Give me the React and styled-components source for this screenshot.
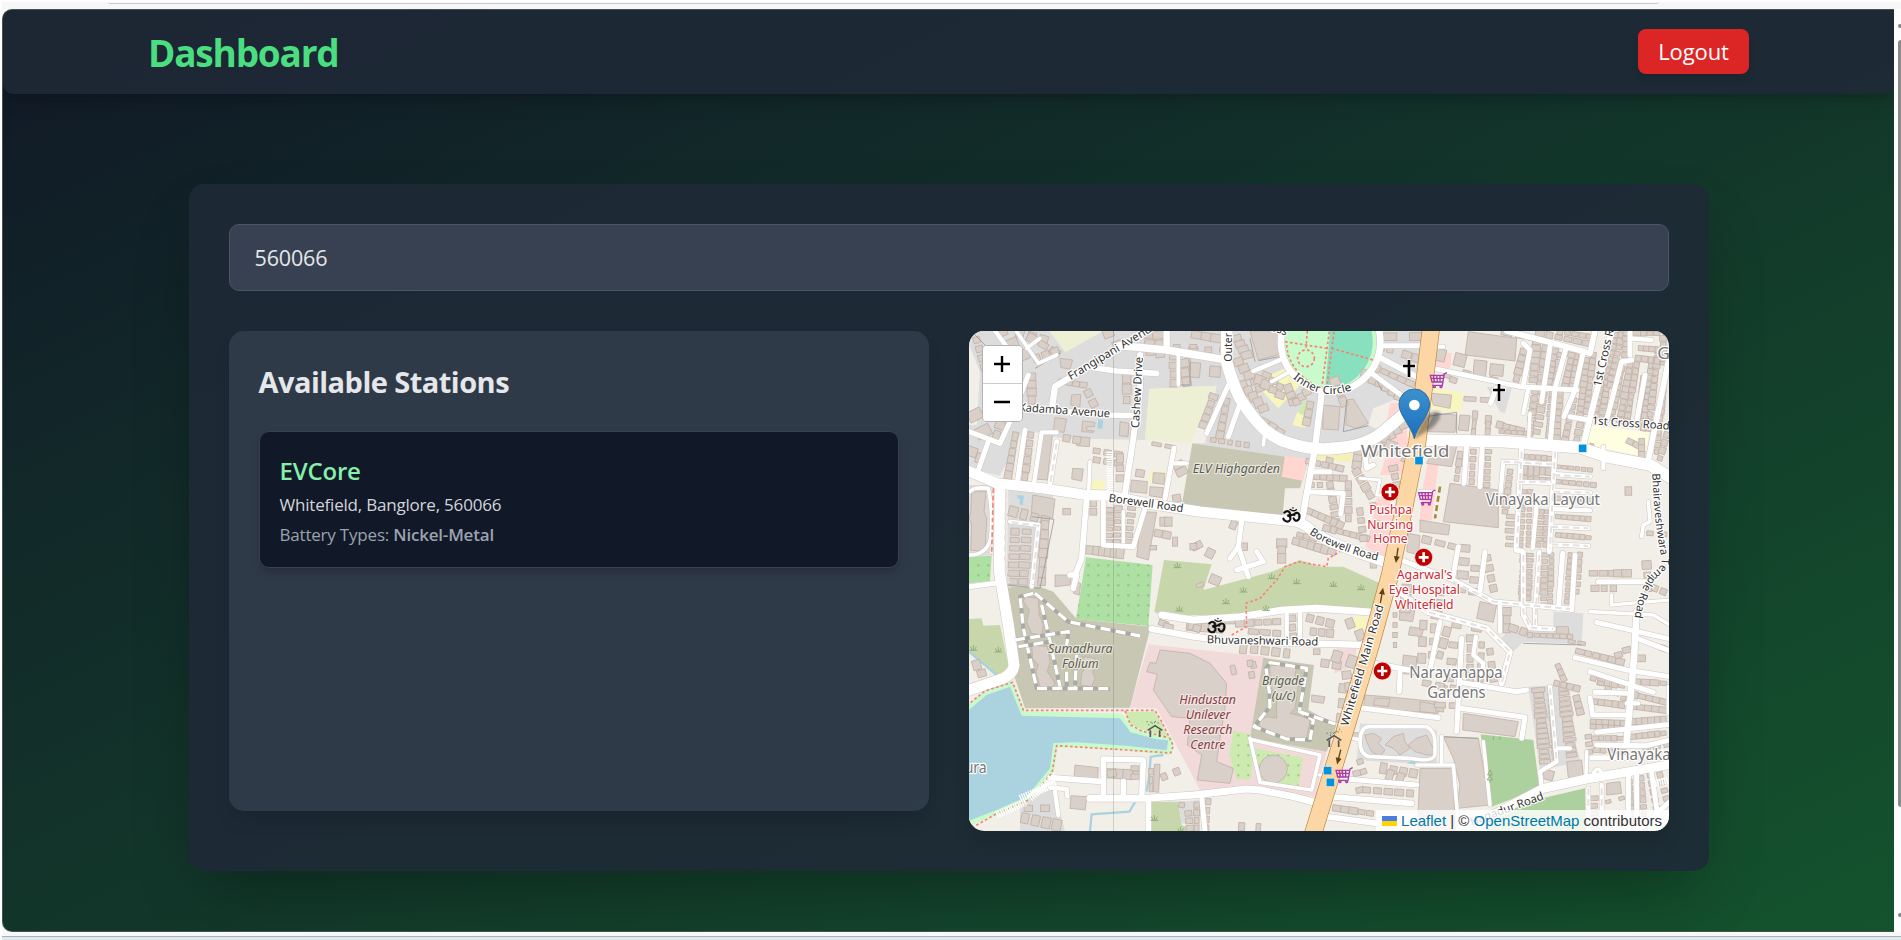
import React from 'react';
import styled, { createGlobalStyle } from 'styled-components';

const GlobalStyle = createGlobalStyle`
  *, *::before, *::after { box-sizing: border-box; }
  body { margin: 0; background: #fff; font-family: "Open Sans", "Noto Sans", sans-serif; overflow: hidden; }
  h1, h2, h3, p { margin: 0; }
  button, input { font-family: inherit; }
`;

/* ---------- browser frame ---------- */
const Frame = styled.div`
  display: flex;
  flex-direction: column;
  height: 940px;
  width: 1901px;
  background: #fafafa;
  border-left: 2px solid #fff;
  overflow: hidden;
`;
const TopStrip = styled.div`
  flex: 0 0 9px;
  background: #f7f7f7;
  border-top: 2px solid #fff;
  padding: 0 242px 0 106px;
`;
const AddressEdge = styled.div`
  height: 2px;
  border-bottom: 1px solid #c9cbcd;
  border-radius: 0 0 8px 8px;
`;
const Viewport = styled.div`
  display: flex;
  flex: 1 1 auto;
  min-height: 0;
`;
const BottomStrip = styled.div`
  flex: 0 0 8px;
  display: flex;
  align-items: flex-end;
  background: #f7f8f8;
  &::after {
    content: "";
    flex: 1;
    height: 4px;
    background: #dfe8ee;
    border-top: 1px solid #a5b2b8;
  }
`;
const Scrollbar = styled.div`
  flex: 0 0 7px;
  display: flex;
  flex-direction: column;
  align-items: flex-end;
  justify-content: space-between;
  padding: 15px 0 15px;
  background: #fdfdfd;
`;
const ScrollArrow = styled.span`
  width: 3px;
  height: 4px;
  border-radius: 3px 0 0 3px;
  background: #85888b;
`;
const ScrollThumb = styled.span`
  width: 3px;
  height: 767px;
  margin-bottom: 94px;
  border-radius: 3px 0 0 3px;
  background: #8b8b8b;
`;

/* ---------- page ---------- */
const Page = styled.div`
  width: 1892px;
  border-radius: 10px 0 0 10px;
  border: solid #45524f;
  border-width: 1px 0 1px 1px;
  overflow: hidden;
  background: linear-gradient(to bottom right, #111827, #14532d);
`;
const Header = styled.header`
  height: 84px;
  padding: 0 145px;
  display: flex;
  align-items: center;
  justify-content: space-between;
  background: rgba(31, 41, 55, 0.88);
  border-radius: 0 0 10px 10px;
  box-shadow: 0 12px 19px -4px rgba(0, 0, 0, 0.15), 0 5px 8px -5px rgba(0, 0, 0, 0.15);
`;
const Brand = styled.h1`
  font-size: 37px;
  line-height: 45px;
  font-weight: 700;
  letter-spacing: -1.2px;
  color: #4ade80;
  padding-top: 1px;
`;
const LogoutButton = styled.button`
  width: 111px;
  height: 45px;
  margin-bottom: 2px;
  padding: 0 0 1px;
  border: 0;
  border-radius: 8px;
  background: #dc2626;
  color: #fff;
  font-size: 22px;
  font-weight: 500;
  letter-spacing: -0.1px;
  box-shadow: 0 5px 8px -1px rgba(0, 0, 0, 0.15);
`;
const Card = styled.main`
  width: 1520px;
  height: 687px;
  margin: 90px auto 0;
  padding: 40px;
  display: flex;
  flex-direction: column;
  gap: 40px;
  border-radius: 15px;
  background: rgba(31, 41, 55, 0.88);
  box-shadow: 0 31px 62px -15px rgba(0, 0, 0, 0.3);
`;
const SearchInput = styled.input`
  display: block;
  flex: 0 0 67px;
  width: 100%;
  padding: 0 25px;
  border: 1px solid #4b5563;
  border-radius: 10px;
  background: #374151;
  color: #e5e7eb;
  font-size: 21.5px;
  letter-spacing: -0.15px;
  outline: none;
`;
const Columns = styled.div`
  display: grid;
  grid-template-columns: 700px 700px;
  gap: 40px;
  align-items: start;
`;
const Panel = styled.section`
  height: 480px;
  padding: 30px;
  border-radius: 15px;
  background: rgba(55, 65, 81, 0.7);
  box-shadow: 0 12px 19px -4px rgba(0, 0, 0, 0.15);
`;
const PanelTitle = styled.h2`
  font-size: 29px;
  line-height: 42px;
  font-weight: 700;
  letter-spacing: -0.53px;
  color: #e5e7eb;
  margin-bottom: 28px;
`;
const StationCard = styled.article`
  height: 137px;
  padding: 19px 20px;
  border: 1px solid #374151;
  border-radius: 10px;
  background: #111827;
  box-shadow: 0 5px 8px -1px rgba(0, 0, 0, 0.2);
`;
const StationName = styled.h3`
  font-size: 24px;
  line-height: 39px;
  font-weight: 600;
  letter-spacing: -0.2px;
  color: #86efac;
`;
const StationLine = styled.p`
  font-size: 17px;
  line-height: 30px;
  letter-spacing: -0.2px;
  color: ${(p) => (p.$muted ? '#9ca3af' : '#d1d5db')};
  strong { font-weight: 600; }
`;

/* ---------- map ---------- */
const MapBox = styled.section`
  position: relative;
  height: 500px;
  border-radius: 15px;
  overflow: hidden;
  background: #f2efe9;
  box-shadow: 0 12px 19px -4px rgba(0, 0, 0, 0.15);
`;
const MapSvg = styled.svg`
  display: block;
  font-family: "Noto Sans", "Open Sans", sans-serif;
`;
const LabelLayer = styled.g`
  paint-order: stroke;
  stroke-width: 7px;
  stroke-linejoin: round;
`;
const ZoomControl = styled.div`
  position: absolute;
  left: 13px;
  top: 14px;
  width: 41px;
  border: 1px solid rgba(0, 0, 0, 0.3);
  border-radius: 5px;
  overflow: hidden;
  background: #fff;
`;
const ZoomButton = styled.button`
  display: flex;
  width: 39px;
  height: ${(p) => (p.$divided ? '38px' : '37px')};
  align-items: center;
  justify-content: center;
  border: 0;
  border-top: ${(p) => (p.$divided ? '1px solid #ccc' : '0')};
  background: #fff;
  padding: 0 0 1px;
`;
const Attribution = styled.div`
  position: absolute;
  right: 0;
  bottom: 0;
  height: 21px;
  padding: 0 6.5px;
  display: flex;
  align-items: center;
  background: rgba(255, 255, 255, 0.8);
  font: 15px/21px "Liberation Sans", Arial, sans-serif;
  color: #333;
  white-space: pre;
  a { color: #0078a8; text-decoration: none; }
  svg { margin-right: 4px; }
`;

const AREAS = [
  ['#dddddd', '27,18 720,18 815,18 830,60 815,175 770,182 568,192 555,345 300,340 190,312 120,452 27,430'],
  ['#dddddd', '770,180 815,110 815,18 1385,18 1375,200 1250,335 1090,385 1045,405 697,355 735,355'],
  ['#f2efe9', '1240,250 1290,230 1380,170 1375,260 1270,320 1225,300'],
  ['#dddddd', '27,480 95,480 90,690 27,695'],
  ['#dddddd', '145,490 280,510 240,790 140,785'],
  ['#f2efe9', '27,60 60,140 50,300 27,300'],
  ['#eef0d5', '268,18 430,18 316,82'],
  ['#eef0d5', '568,192 770,182 693,355 555,345'],
  ['#c7c7b4', '697,355 1045,405 1020,490 975,490 968,572 665,542'],
  ['#ffd6d1', '975,392 1042,402 1030,468 965,455'],
  ['#f8f6bf', '882,172 975,130 1020,180 955,250'],
  ['#f8f6bf', '1012,260 1050,265 1035,308 998,300'],
  ['#cdebb0', '1030,228 1055,232 1045,275 1015,265'],
  ['#f5f0b5', '1070,378 1180,382 1172,412 1065,402'],
  ['#ffd6d1', '1290,235 1330,230 1350,400 1330,450 1260,450 1275,400 1310,400 1280,290'],
  ['#ffd6d1', '1250,520 1290,525 1330,600 1280,700 1215,665 1235,600'],
  ['#ffd6d1', '1425,80 1475,85 1470,130 1422,125'],
  ['#ffd6d1', '1405,400 1437,405 1415,585 1378,590 1390,480'],
  ['#aedfa3', '27,695 95,692 90,768 27,775'],
  ['#aedfa3', '378,697 578,720 565,903 348,882'],
  ['#c8d7ab', '612,705 755,718 730,795 935,740 1020,705 1080,725 1150,725 1260,775 1235,850 1070,845 820,870 600,870 583,860'],
  ['#c8d7ab', '27,882 65,880 70,902 120,900 148,1035 110,1055 27,980'],
  ['#c7c7b4', '140,785 240,785 280,800 350,882 572,905 510,1148 195,1150 165,1060'],
  ['#f2dada', '565,958 915,995 870,1240 1100,1280 1065,1415 880,1400 720,1395 590,1150 510,1148'],
  ['#f2dada', '1130,970 1190,970 1185,1025 1122,1045'],
  ['#c7c7b4', '910,998 1062,1020 1045,1155 1130,1200 1100,1280 870,1240'],
  ['#cdebb0', '820,1215 870,1230 885,1270 870,1365 830,1362 808,1290'],
  ['#cdebb0', '885,1270 1030,1298 1015,1385 905,1370'],
  ['#c8d7ab', '575,1430 655,1430 665,1500 710,1518 575,1518'],
  ['#dddddd', '655,1430 720,1425 720,1500 665,1495'],
  ['#dddddd', '180,1430 280,1390 315,1518 180,1518'],
  ['#dddddd', '1200,1195 1430,1215 1430,1320 1190,1305'],
  ['#dddddd', '1780,860 1870,865 1865,957 1690,950 1655,985 1625,940 1650,905 1780,920'],
  ['#dddddd', '1705,1085 1790,1080 1862,1310 1790,1325 1740,1335'],
  ['#dddddd', '1580,185 1655,190 1635,265 1620,260'],
  ['#add19e', '1562,1228 1720,1245 1738,1390 1595,1445'],
  ['#add19e', '1595,1455 1875,1390 1877,1518 1580,1518'],
  ['#fffee0', '1885,300 2068,322 2055,395 1875,360'],
  ['#f8f6bf', '1420,190 1510,205 1502,265 1410,250'],
  ['#f8f6bf', '1185,872 1222,875 1215,915 1182,910'],
  ['#f8f6bf', '572,438 620,442 615,482 568,472'],
  ['#f8f6bf', '398,465 435,468 432,498 394,494'],
  ['#aad3df', '415,283 430,285 427,312 412,310'],
  ['#aad3df', '172,510 192,512 188,540 178,538 180,522 172,520'],
  ['#aad3df', '1340,1315 1360,1305 1380,1320'],
];

const BIG = [
  '600,975 690,985 750,1015 800,1075 795,1150 780,1240 770,1310 820,1330 810,1375 712,1365 725,1290 682,1260 690,1180 635,1175 580,1095 592,1048 560,1040 570,1012 588,1015',
  '1525,20 1670,40 1665,108 1515,90', '1470,475 1615,495 1615,608 1450,590', '1380,585 1470,600 1465,630 1380,620',
  '870,18 960,18 970,85 895,105', '1090,240 1140,245 1135,315 1088,312', '1160,225 1180,222 1225,295 1190,310 1158,300',
  '218,510 285,522 278,580 214,568', '35,500 78,500 72,560 80,580 75,680 32,675 35,600 28,580 32,560',
  '245,320 278,325 262,465 222,462', '338,430 370,432 365,468 335,462', '300,100 338,105 330,132 303,128',
  '350,335 390,338 388,365 350,362', '285,278 320,282 312,322 280,318', '368,288 405,292 403,305 380,305 380,315 403,318 400,322 365,320',
  '480,290 507,295 504,335 478,332', '335,210 362,208 360,245 332,240', '545,560 590,562 565,705 530,695',
  '515,465 562,470 560,505 510,500', '570,485 610,488 606,518 568,512', '580,443 615,445 612,478 578,474',
  '195,815 235,820 238,870 250,900 245,930 215,925 200,890 208,855 190,830', '215,960 262,965 270,1010 262,1040 285,1075 275,1090 240,1085 228,1040 235,1020 218,1000', '370,995 405,1000 398,1040 405,1060 395,1085 362,1080 365,1045 375,1030',
  '345,1320 415,1328 413,1362 342,1355', '333,1412 380,1415 376,1455 330,1450', '583,1318 600,1318 596,1402 580,1400',
  '930,1020 1010,1025 1005,1050 1015,1080 1005,1150 990,1165 1045,1180 1050,1190 1038,1245 970,1235 905,1215 895,1190 920,1175 950,1180 950,1120 930,1080',
  '1240,1225 1265,1240 1255,1255 1275,1275 1260,1295 1235,1280 1220,1250 1215,1230', '1300,1235 1330,1225 1335,1250 1350,1270 1320,1290 1300,1270 1275,1260', '1370,1240 1400,1230 1415,1260 1430,1290 1400,1290 1365,1280 1345,1260',
  '1510,1165 1675,1190 1665,1235 1508,1215', '1380,1330 1480,1330 1485,1518 1372,1518', '1450,1235 1555,1240 1590,1440 1490,1450 1500,1380 1480,1300',
  '1215,1110 1280,1115 1430,1130 1430,1165 1210,1148', '1150,1220 1210,1225 1205,1240 1150,1235', '1430,355 1490,365 1475,425 1400,415', '1380,1130 1435,1140 1435,1165 1380,1160',
  '1425,265 1490,270 1485,322 1400,320', '1345,625 1380,632 1376,690 1340,680', '1100,395 1120,400 1115,430 1095,425',
  '1245,1120 1290,1120 1285,1145 1240,1140', '1330,990 1370,995 1368,1050 1325,1045', '1320,850 1365,855 1358,890 1318,885', '1560,830 1610,840 1600,892 1550,880',
  '1820,1310 1865,1305 1870,1360 1825,1358', '1790,905 1825,905 1828,940 1788,940', '1410,205 1475,210 1470,250 1420,240',
  '285,750 335,750 330,780 285,785', '345,770 362,775 358,810 340,805', '1940,1375 1980,1370 1985,1405 1940,1410',
  '1500,270 1530,272 1525,318 1495,315', '1350,905 1390,912 1385,935 1345,930', '1055,1110 1095,1115 1090,1135 1055,1130',
];

/* x1, y1, x2, y2, count, width, height of the building plots */
const ROWS = [
  [50, 45, 90, 180, 6, 24, 20], [125, 20, 190, 90, 3, 36, 28], [180, 25, 250, 45, 3, 26, 24], [215, 40, 285, 80, 3, 30, 22],
  [230, 100, 285, 80, 3, 22, 26], [215, 155, 215, 225, 4, 24, 24], [45, 270, 70, 320, 2, 40, 34], [120, 300, 110, 330, 2, 26, 24],
  [35, 380, 60, 400, 2, 28, 26], [165, 335, 145, 450, 6, 20, 24], [212, 330, 195, 455, 6, 20, 22], [305, 170, 370, 180, 4, 20, 16],
  [445, 25, 475, 60, 2, 32, 26], [385, 205, 400, 235, 2, 22, 22], [500, 160, 500, 225, 3, 24, 26], [570, 30, 570, 80, 3, 28, 24], [595, 30, 600, 85, 3, 30, 26],
  [320, 340, 350, 345, 2, 26, 22], [410, 378, 475, 388, 3, 24, 16], [410, 405, 475, 415, 3, 24, 16], [480, 400, 480, 460, 3, 22, 24],
  [540, 445, 560, 448, 1, 26, 26], [590, 358, 630, 365, 2, 28, 12], [655, 420, 665, 440, 2, 30, 22], [650, 520, 655, 550, 2, 22, 22],
  [160, 560, 255, 585, 4, 24, 28], [165, 620, 160, 770, 7, 30, 18], [200, 620, 190, 770, 7, 30, 18], [255, 600, 245, 770, 7, 24, 28],
  [400, 535, 400, 560, 2, 20, 20], [450, 555, 445, 650, 6, 26, 14], [475, 550, 470, 650, 6, 22, 14], [515, 550, 505, 650, 6, 22, 14], [390, 675, 480, 685, 6, 22, 28],
  [320, 560, 320, 560, 1, 28, 20], [610, 590, 625, 590, 2, 24, 26], [595, 625, 620, 630, 2, 26, 20], [645, 650, 645, 650, 1, 16, 24], [580, 668, 580, 668, 1, 20, 16], [705, 665, 715, 660, 2, 20, 22],
  [640, 95, 640, 175, 4, 22, 20], [670, 115, 680, 170, 3, 30, 24], [700, 75, 790, 75, 3, 24, 16], [705, 135, 765, 140, 2, 36, 38], [650, 65, 700, 65, 2, 22, 14], [710, 30, 770, 40, 3, 34, 24],
  [830, 40, 860, 90, 4, 28, 20], [835, 110, 900, 190, 5, 28, 22], [900, 165, 960, 210, 4, 32, 24], [920, 150, 960, 185, 3, 24, 20], [760, 215, 730, 300, 5, 24, 20], [800, 230, 780, 330, 5, 22, 22],
  [850, 180, 910, 250, 5, 26, 26], [890, 280, 960, 320, 4, 24, 22], [985, 190, 1000, 230, 3, 26, 22], [1010, 230, 1040, 200, 3, 22, 24], [1050, 240, 1040, 290, 3, 20, 24], [760, 345, 860, 360, 5, 16, 14],
  [1125, 170, 1150, 230, 3, 26, 26], [1220, 150, 1320, 215, 6, 30, 26], [1250, 130, 1350, 175, 5, 26, 18], [1290, 35, 1370, 35, 2, 46, 26], [1340, 90, 1370, 100, 2, 30, 24], [1265, 70, 1290, 75, 2, 18, 16],
  [1195, 380, 1190, 420, 3, 24, 20], [1240, 380, 1330, 300, 6, 26, 24], [1270, 340, 1340, 400, 4, 30, 28], [1050, 410, 1140, 430, 5, 22, 18], [1050, 455, 1150, 460, 6, 20, 16], [1055, 480, 1080, 480, 2, 18, 14],
  [1110, 480, 1130, 590, 6, 22, 18], [1165, 480, 1165, 580, 5, 20, 22], [1190, 440, 1230, 510, 4, 24, 24], [1050, 560, 1140, 600, 6, 22, 20], [1010, 650, 1115, 680, 6, 24, 22], [965, 655, 965, 700, 3, 28, 26], [1100, 610, 1220, 640, 7, 20, 18],
  [1200, 560, 1210, 640, 4, 22, 20], [1020, 630, 1060, 640, 3, 22, 16], [700, 665, 710, 665, 1, 22, 20], [750, 685, 760, 690, 1, 26, 28], [820, 600, 825, 605, 1, 20, 24], [850, 665, 870, 665, 1, 24, 20],
  [765, 765, 768, 768, 1, 30, 34], [1300, 430, 1310, 480, 3, 24, 20], [1240, 715, 1245, 715, 1, 22, 30], [1240, 545, 1250, 600, 2, 22, 24],
  [1440, 90, 1500, 105, 2, 36, 34], [1560, 130, 1610, 135, 2, 40, 42], [1520, 145, 1600, 165, 2, 24, 20], [1460, 150, 1480, 165, 2, 20, 18], [1530, 222, 1580, 225, 2, 34, 14], [1545, 270, 1540, 325, 3, 14, 24],
  [1585, 285, 1583, 320, 3, 16, 24], [1620, 300, 1680, 315, 4, 26, 18], [1625, 320, 1700, 325, 5, 18, 12],
  [1690, 80, 1670, 160, 5, 22, 20], [1730, 50, 1720, 165, 7, 26, 18], [1755, 70, 1735, 200, 7, 18, 20], [1785, 80, 1770, 170, 6, 20, 18], [1800, 90, 1785, 175, 5, 18, 18], [1835, 90, 1815, 185, 6, 20, 18], [1850, 95, 1835, 185, 6, 14, 18],
  [1725, 200, 1710, 325, 7, 22, 16], [1750, 210, 1730, 320, 6, 24, 16], [1775, 205, 1765, 330, 7, 16, 18], [1800, 205, 1790, 340, 8, 20, 18], [1840, 225, 1815, 345, 7, 20, 16], [1860, 300, 1850, 345, 3, 20, 18],
  [1640, 25, 1720, 40, 3, 30, 14], [1740, 25, 1880, 55, 6, 24, 18], [1800, 20, 1890, 35, 5, 20, 16],
  [1880, 105, 1860, 270, 10, 20, 18], [1900, 90, 1880, 260, 10, 18, 18], [1940, 90, 1905, 270, 11, 20, 16], [1965, 30, 1925, 280, 15, 20, 16], [1985, 30, 1950, 180, 9, 20, 16], [2000, 25, 1995, 90, 5, 20, 18],
  [1985, 130, 1955, 280, 9, 18, 18], [2010, 120, 1980, 285, 10, 20, 18], [2030, 120, 2000, 290, 10, 18, 18], [2050, 160, 2035, 300, 8, 18, 16], [2075, 120, 2050, 310, 11, 20, 18], [2095, 80, 2065, 310, 12, 20, 18], [2045, 70, 2110, 75, 5, 20, 16],
  [2035, 100, 2110, 110, 5, 18, 18], [2110, 40, 2110, 100, 4, 20, 16], [2030, 25, 2090, 25, 4, 20, 14], [2115, 160, 2090, 380, 12, 16, 18], [1895, 360, 2060, 400, 1, 14, 10], [2010, 350, 2030, 360, 2, 22, 18], [2045, 350, 2045, 390, 3, 18, 20], [2120, 330, 2100, 400, 4, 18, 18],
  [1500, 390, 1490, 460, 4, 16, 20], [1540, 380, 1535, 470, 5, 16, 18], [1585, 380, 1580, 480, 6, 18, 14], [1650, 440, 1635, 560, 7, 20, 16],
  [1700, 395, 1770, 400, 5, 16, 14], [1695, 435, 1765, 440, 5, 16, 26], [1695, 458, 1765, 464, 5, 16, 12], [1795, 425, 1890, 435, 6, 16, 12], [1795, 470, 1900, 480, 6, 18, 14], [1795, 520, 1890, 525, 6, 18, 14],
  [1690, 500, 1680, 660, 10, 18, 12], [1710, 500, 1705, 660, 10, 14, 12], [1745, 560, 1735, 660, 7, 18, 12], [1760, 560, 1755, 660, 7, 14, 12], [1795, 575, 1885, 582, 6, 18, 14], [1795, 630, 1885, 638, 6, 18, 14],
  [1655, 575, 1650, 660, 5, 30, 12], [1690, 690, 1685, 820, 9, 18, 12], [1710, 690, 1705, 820, 9, 18, 12], [1755, 690, 1750, 840, 9, 20, 14], [1775, 690, 1770, 830, 9, 16, 14], [1830, 690, 1820, 830, 9, 14, 14], [1860, 690, 1850, 800, 6, 16, 16],
  [1400, 645, 1480, 665, 3, 30, 20], [1515, 670, 1505, 790, 4, 30, 26], [1545, 730, 1540, 800, 3, 24, 20], [1580, 700, 1600, 790, 4, 24, 20], [1640, 860, 1640, 910, 3, 24, 24], [1660, 910, 1690, 920, 2, 24, 20], [1710, 930, 1830, 935, 7, 18, 14], [1835, 950, 1865, 955, 2, 24, 12],
  [1440, 800, 1430, 870, 3, 30, 24], [1340, 790, 1335, 850, 3, 30, 24], [1490, 900, 1550, 910, 2, 28, 18], [1460, 920, 1440, 990, 3, 22, 26], [1480, 960, 1470, 1060, 3, 24, 22], [1530, 940, 1530, 1060, 5, 20, 24], [1565, 960, 1560, 1060, 4, 20, 20], [1590, 980, 1600, 1060, 3, 22, 20],
  [1390, 900, 1385, 1000, 3, 24, 26], [1420, 910, 1415, 990, 3, 18, 24], [1305, 870, 1305, 960, 4, 12, 16], [1450, 1090, 1440, 1150, 2, 22, 20], [1400, 1075, 1480, 1090, 3, 24, 18], [1440, 1140, 1480, 1142, 2, 30, 16],
  [1735, 1095, 1755, 1310, 15, 34, 13], [1810, 1090, 1835, 1290, 14, 34, 13], [1770, 1110, 1785, 1300, 12, 14, 13], [1790, 1075, 1850, 1090, 4, 18, 18], [1795, 1025, 1810, 1060, 3, 16, 18], [1850, 1120, 1860, 1160, 3, 20, 18], [1765, 1350, 1780, 1360, 1, 30, 26], [1885, 1235, 1890, 1280, 3, 18, 16],
  [1860, 980, 1980, 1010, 6, 24, 18], [1975, 990, 2000, 975, 2, 28, 18], [2040, 1000, 2070, 1000, 1, 38, 20], [1920, 1070, 1985, 1080, 4, 18, 20], [1900, 1060, 1990, 1120, 5, 18, 14], [1905, 1130, 1985, 1140, 5, 22, 20], [1900, 1190, 1990, 1195, 6, 18, 16], [1900, 1205, 1990, 1210, 6, 18, 14], [1905, 1240, 2000, 1240, 6, 18, 14], [1910, 1275, 1990, 1280, 5, 18, 14],
  [2025, 1110, 2110, 1130, 5, 22, 18], [2020, 1145, 2110, 1155, 5, 24, 18], [2020, 1190, 2110, 1185, 6, 20, 20], [2020, 1235, 2110, 1225, 6, 18, 16], [2030, 1070, 2110, 1075, 4, 24, 16], [2110, 970, 2125, 975, 1, 18, 16], [2060, 1270, 2120, 1260, 3, 20, 14],
  [1900, 1420, 1905, 1510, 5, 26, 16], [2010, 1370, 2015, 1510, 8, 16, 16], [2045, 1360, 2055, 1510, 8, 16, 16], [2070, 1350, 2090, 1450, 5, 18, 16], [2100, 1350, 2120, 1420, 4, 18, 16], [1945, 1430, 1985, 1420, 2, 16, 12],
  [1900, 745, 1960, 745, 3, 24, 18], [1975, 745, 2000, 745, 2, 26, 22], [1905, 790, 1960, 790, 3, 22, 18], [2060, 720, 2065, 790, 3, 24, 24], [2005, 498, 2006, 498, 1, 24, 22], [2070, 625, 2110, 628, 2, 22, 16], [2085, 790, 2110, 800, 2, 20, 20],
  [690, 905, 780, 910, 5, 22, 24], [810, 885, 860, 885, 2, 30, 22], [840, 895, 950, 890, 5, 26, 20], [880, 920, 950, 925, 3, 28, 20], [995, 880, 1000, 935, 3, 22, 22], [1050, 880, 1110, 895, 3, 26, 24], [1060, 920, 1110, 925, 3, 22, 22], [1170, 895, 1200, 930, 2, 26, 28], [850, 970, 980, 985, 5, 22, 28],
  [1070, 980, 1070, 985, 1, 20, 20], [1095, 1015, 1130, 1020, 2, 24, 26], [1130, 995, 1175, 1010, 2, 26, 36], [1150, 1090, 1140, 1180, 3, 24, 26], [1160, 1050, 1170, 1120, 3, 24, 22], [820, 1035, 880, 1020, 2, 18, 24], [870, 1015, 875, 1050, 2, 18, 22], [610, 895, 625, 905, 2, 30, 18], [695, 905, 710, 910, 2, 22, 20],
  [450, 1345, 530, 1350, 4, 26, 26], [455, 1345, 530, 1330, 1, 26, 20], [525, 1330, 525, 1355, 2, 22, 18], [573, 1340, 573, 1390, 3, 12, 22], [612, 1355, 650, 1340, 2, 22, 22], [195, 1480, 290, 1500, 4, 26, 30], [205, 1450, 255, 1450, 2, 28, 18], [50, 1020, 65, 1045, 2, 26, 26],
  [665, 1440, 715, 1450, 2, 18, 18], [685, 1465, 690, 1510, 3, 20, 18], [710, 1440, 710, 1510, 4, 16, 18], [745, 1430, 740, 1510, 4, 14, 18], [845, 1505, 895, 1508, 2, 16, 22], [1270, 1330, 1360, 1345, 4, 24, 28], [1200, 1310, 1210, 1340, 2, 20, 18], [1190, 1345, 1200, 1395, 2, 24, 18], [1220, 1395, 1350, 1405, 5, 24, 18], [1130, 1450, 1230, 1465, 5, 24, 18], [1290, 1350, 1320, 1360, 2, 20, 28],
  [720, 780, 730, 770, 1, 20, 14], [1300, 790, 1290, 800, 1, 14, 14],
];

const ROADS = [
  [34, 'M800,10 V110 Q815,170 840,220 Q870,270 910,310 Q950,345 990,355 Q1040,372 1090,372 Q1150,370 1190,360 Q1240,345 1270,320 L1375,230'],
  [34, 'M1380,345 L1630,350 1860,368 1940,395 2070,420 2135,460'], [30, 'M20,436 L110,475 250,490 380,510 450,512 560,535 720,560 1010,590 Q1040,600 1060,622 L1110,650 1200,685 1280,712'],
  [32, 'M120,480 L118,740 145,900 162,1020 Q160,1045 130,1060 L20,1098'], [26, 'M1560,1490 L1750,1390 1880,1362 2135,1318'],
  [22, 'M480,62 L620,75 800,105'], [18, 'M275,255 L285,185 400,115 570,10'], [16, 'M400,128 L470,138 590,145'], [16, 'M190,250 L450,270 520,272'], [17, 'M540,90 V190 L520,340 495,505'],
  [18, 'M620,18 V75'], [10, 'M655,80 V180'], [14, 'M642,370 L615,520'], [12, 'M645,415 H680'], [14, 'M195,315 L172,470'], [14, 'M290,350 L270,475'], [12, 'M290,322 H245 L222,475'], [10, 'M390,410 L386,500'], [14, 'M205,150 L150,290 120,355 27,320'], [14, 'M85,350 L55,435'], [12, 'M105,18 L140,65'], [10, 'M170,20 L235,115 290,90'], [10, 'M200,70 L240,40'],
  [16, 'M380,520 L365,700 345,750 H330 M350,750 L340,790'], [14, 'M430,510 V660 L520,665 555,550'], [10, 'M490,560 V650'], [12, 'M150,590 L235,600 215,785'], [10, 'M30,500 Q40,485 85,490 Q100,560 92,640 Q80,690 30,690'], [14, 'M27,785 L105,775'],
  [18, 'M1085,205 L1065,370 1025,590'], [14, 'M1050,440 H1110'], [14, 'M1040,500 L1150,505 1142,568'], [14, 'M805,180 L740,325'], [14, 'M840,235 L805,335'], [12, 'M880,138 L960,105'], [10, 'M915,320 L910,360'], [10, 'M935,170 L990,140'],
  [14, 'M845,590 L835,665 810,700'], [14, 'M835,665 L865,755 M830,735 L910,710 890,680'], [14, 'M1260,62 H1380'], [16, 'M1255,95 L1370,155'], [14, 'M1235,145 L1330,215'], [8, 'M1200,460 L1260,465 1250,510 1310,515'], [14, 'M1215,390 L1220,430 1240,420'], [10, 'M1380,500 L1420,500'],
  [20, 'M605,870 L700,885 840,875 970,855 1070,850 1240,862'], [18, 'M575,912 L700,935 800,948 1220,960'], [12, 'M980,860 V940'], [12, 'M1020,860 V940'], [20, 'M390,1420 H560 L700,1410 860,1392 900,1395 1000,1415 1065,1432'], [16, 'M270,1358 L430,1370 V1420 M430,1370 V1302 L550,1305 545,1420 M490,1370 V1415'], [16, 'M565,1425 V1520'], [14, 'M725,1415 L735,1520'],
  [14, 'M1210,1150 L1435,1178'], [16, 'M1240,1015 L1345,1035'], [14, 'M1320,1040 L1318,1100'], [16, 'M1110,1415 L1355,1435'], [14, 'M1160,1362 L1370,1380'], [16, 'M1100,1475 L1250,1495'], [10, 'M870,1240 L900,1372 1055,1395 1080,1290 870,1243 M1078,1350 H1100'], [10, 'M1160,1235 L1200,1245 M1225,1205 H1400 Q1425,1220 1425,1250 V1290 Q1420,1305 1390,1305 L1350,1300 1230,1295 Q1200,1290 1200,1250 Q1200,1210 1225,1205'],
  [14, 'M1310,700 L1480,765 1600,830 1830,852'], [16, 'M1290,780 L1400,860 1580,910 1650,980 1625,1075'], [14, 'M1440,890 L1410,1035'], [14, 'M1505,940 L1490,1220'], [14, 'M1500,1072 L1670,1100 1700,1095'], [14, 'M1500,1150 L1695,1177 1685,1240'], [12, 'M1548,935 L1540,990 1570,1015 1565,1050'], [12, 'M1620,840 V920'],
  [14, 'M1420,130 L1680,185 1850,195'], [16, 'M1640,18 L1820,65 1890,85 1905,18'], [14, 'M1690,55 L1710,75 1690,180'], [14, 'M1770,65 L1745,230'], [14, 'M1818,70 L1785,190 1770,360'], [14, 'M1870,80 L1845,195 1812,275'], [12, 'M1705,190 L1690,265'], [10, 'M1710,265 L1706,340'], [14, 'M1830,275 L1885,285'], [14, 'M1608,190 L1592,235'], [12, 'M1420,65 H1450'],
  [17, 'M1955,18 L1870,360'], [14, 'M2010,18 V90'], [12, 'M2010,40 L2075,45'], [14, 'M2015,105 L1985,110 1940,285'], [14, 'M2055,150 L2030,290'], [16, 'M2125,110 L2065,405'], [12, 'M1930,365 V430'],
  [14, 'M1520,360 L1512,475'], [14, 'M1567,360 L1560,485'], [14, 'M1685,368 L1668,675 1690,680 V870 L1710,908 1780,912'], [14, 'M1785,375 L1768,680'], [12, 'M1630,410 L1780,418 M1630,410 L1622,500'], [12, 'M1675,470 L1775,474'], [12, 'M1730,540 L1718,670'], [12, 'M1780,447 L1890,455 M1780,497 L1890,503 M1775,552 L1890,556 M1775,605 L1885,610 M1775,658 L1885,663'],
  [12, 'M1738,680 L1725,860 V905'], [14, 'M1808,685 L1795,850'], [14, 'M1845,690 L1835,855'], [14, 'M1495,665 L1478,760'], [14, 'M1575,680 L1560,800'], [14, 'M1915,770 H2065'], [9, 'M1955,810 V840 L2070,830 2130,825'], [10, 'M1890,860 L2080,870 2130,900'], [14, 'M1910,892 L2130,942'], [19, 'M2030,860 L2022,1000 2000,1250'], [14, 'M2030,940 L2130,978'], [14, 'M1845,998 L2000,1035 2130,1055'], [14, 'M1890,1040 L2080,1102'], [14, 'M1905,1102 L2005,1105'], [14, 'M1890,1118 L1898,1170 H2010'], [14, 'M1910,1222 L2130,1198'], [14, 'M1910,1260 L2060,1262 2130,1245'], [14, 'M1895,1298 H2010'], [12, 'M2000,1135 H2035'], [10, 'M2065,530 L2070,590 2050,600 2045,635'],
  [12, 'M1770,1085 L1790,1310 1740,1340 1745,1385'], [12, 'M1790,1270 H1830'], [10, 'M1445,1235 V1320 M1370,1320 H1480 L1495,1500 M1570,1250 L1590,1440'], [12, 'M1885,1390 V1518 M1925,1380 V1518'], [14, 'M2005,1350 V1518 M2030,1350 V1518'], [14, 'M2075,1345 L2100,1518 M2050,1500 L2130,1430'], [10, 'M1880,1280 L1878,1350 M1900,1345 Q1915,1320 1925,1345'], [10, 'M2125,1085 V1165'], [12, 'M270,1388 L320,1392 322,1415 M285,1400 L295,1470'],
];

const DASHED = [
  'M220,805 L180,815 190,910 230,1090 450,1091', 'M225,805 L325,890 540,933', 'M245,840 L270,950 300,1085', 'M165,945 L325,920 320,960', 'M175,965 L270,950', 'M350,990 L345,1085', 'M320,1040 V1085',
  'M930,1013 L1040,1030 1018,1160 1060,1185 1050,1245 980,1242 882,1205 930,1145 928,1100 918,1030 Z', 'M1018,1160 L1125,1197',
];

const LABEL_KINDS = {
  road: { size: 34, fill: '#333', halo: '#fff' },
  place: { size: 48, fill: '#777', halo: '#fff' },
  area: { size: 37, fill: '#5b5b4e', halo: '#e8e6dd', italic: true },
  industry: { size: 37, fill: '#7d3f40', halo: '#f6e4e4', italic: true },
  health: { size: 37, fill: '#cc2a33', halo: '#fff' },
};

/* kind, text, x, y, length, angle */
const LABELS = [
  ['road', 'Frangipani Avenue', 332, 166, 306, -31], ['road', 'Kadamba Avenue', 176, 258, 274, 4], ['road', 'Cashew Drive', 537, 310, 214, -87],
  ['road', 'Borewell Road', 445, 530, 226, 8], ['road', 'Outer', 815, 110, 86, -90], ['road', 'oss', 930, 16, 50, 18],
  ['road', 'Whitefield Main Road', 1164, 1205, 378, -73.5], ['road', 'Bhuvaneshwari Road', 740, 955, 335, 1.2], ['road', '1st Cross Road', 1895, 298, 234, 4], ['road', '1st Cross Road', 1922, 187, 236, -77], ['road', 'Hagadur Road', 1535, 1502, 232, -20],
  ['area', 'ELV Highgarden', 698, 445, 262, 0], ['area', 'Sumadhura', 264, 984, 194, 0], ['area', 'Folium', 306, 1029, 110, 0], ['area', 'Brigade', 906, 1081, 127, 0], ['area', '(u/c)', 935, 1125, 72, 0],
  ['industry', 'Hindustan', 658, 1137, 170, 0], ['industry', 'Unilever', 677, 1181, 134, 0], ['industry', 'Research', 670, 1226, 147, 0], ['industry', 'Centre', 691, 1271, 105, 0],
  ['health', 'Pushpa', 1228, 566, 128, 0], ['health', 'Nursing', 1222, 611, 138, 0], ['health', 'Home', 1240, 655, 103, 0], ['health', "Agarwal's", 1310, 762, 167, 0], ['health', 'Eye Hospital', 1286, 807, 214, 0], ['health', 'Whitefield', 1305, 852, 176, 0],
  ['place', 'Whitefield', 1202, 395, 266, 0], ['place', 'Vinayaka Layout', 1578, 541, 342, 0], ['place', 'Narayanappa', 1348, 1060, 280, 0], ['place', 'Gardens', 1402, 1118, 175, 0], ['place', 'Vinayaka', 1942, 1304, 190, 0], ['place', 'ura', 14, 1345, 66, 0], ['place', 'G', 2092, 103, 38, 0],
];

const CURVED = [
  ['borewell', 'Borewell Road', 'M1047,626 Q1110,672 1256,708', 222],
  ['inner', 'Inner Circle', 'M998,160 Q1090,236 1188,190', 192],
  ['temple', 'Bhairaveshwara Temple Road', 'M2077,445 Q2082,600 2104,695 Q2108,722 2090,735 Q2040,770 2024,880', 458],
];

const jitter = (i, k) => (((i * 37 + k * 53) % 17) / 17 - 0.5);

function BuildingRow({ row, seed }) {
  const [x1, y1, x2, y2, n, w, h] = row;
  const vertical = Math.abs(y2 - y1) > Math.abs(x2 - x1);
  const base = (Math.atan2(y2 - y1, x2 - x1) * 180) / Math.PI - (vertical ? 90 : 0);
  const tilt = Math.abs(base) > 30 ? base / 2 : base;
  return Array.from({ length: n }, (_, i) => {
    const t = n === 1 ? 0 : i / (n - 1);
    const bw = w * (1 + jitter(i, seed) * 0.35);
    const bh = h * (1 + jitter(seed, i + 3) * 0.35);
    const cx = x1 + (x2 - x1) * t;
    const cy = y1 + (y2 - y1) * t;
    return <rect key={i} x={cx - bw / 2} y={cy - bh / 2} width={bw} height={bh} transform={`rotate(${tilt} ${cx} ${cy})`} />;
  });
}

function MapLabel({ label }) {
  const [kind, text, x, y, length, angle] = label;
  const k = LABEL_KINDS[kind];
  return (
    <text x={x} y={y} fontSize={k.size} fill={k.fill} stroke={k.halo} fontStyle={k.italic ? 'italic' : 'normal'}
      textLength={length} lengthAdjust="spacingAndGlyphs" transform={`rotate(${angle} ${x} ${y})`}>{text}</text>
  );
}

const Om = ({ x, y }) => (
  <g transform={`translate(${x} ${y})`} fill="none" stroke="#111" strokeWidth="6.5" strokeLinecap="round">
    <path d="M-22,-9 Q-12,-18 -6,-10 Q-3,-2 -13,0 Q-2,1 -4,11 Q-8,20 -17,17 Q-23,15 -25,9 M-7,2 Q3,-6 8,-2 M8,-5 Q18,-13 23,-3 Q25,9 18,14 Q10,18 6,8" />
    <path d="M-5,-19 Q5,-11 14,-18 M4,-24 v1" strokeWidth="4" />
  </g>
);
const Christian = ({ x, y }) => (
  <g fill="none">
    <path d={`M${x},${y - 27} V${y + 27} M${x - 20},${y - 7} H${x + 20}`} stroke="#fff" strokeWidth="12" />
    <path d={`M${x},${y - 25} V${y + 26} M${x - 18},${y - 7} H${x + 18}`} stroke="#000" strokeWidth="8" />
  </g>
);
const Hospital = ({ x, y }) => (
  <g><circle cx={x} cy={y} r="27" fill="#bf0000" stroke="#fff" strokeWidth="2" /><path d={`M${x - 15},${y} h30 M${x},${y - 15} v30`} stroke="#fff" strokeWidth="8" /></g>
);
const Cart = ({ x, y }) => (
  <g transform={`translate(${x} ${y})`} fill="none" stroke="#ac39ac" strokeWidth="4">
    <path d="M26,-22 L18,-18 12,16 H-18 M18,-14 H-24 L-19,6 H14 M-15,-14 L-11,6 M-5,-14 L-3,6 M5,-14 V6 M-22,-5 H16" />
    <circle cx="-12" cy="20" r="3" /><circle cx="8" cy="20" r="3" />
  </g>
);
const Arrow = ({ x, y, angle }) => (
  <g transform={`translate(${x} ${y}) rotate(${angle})`}><path d="M0,-22 V10" stroke="#5c4013" strokeWidth="4" /><path d="M-9,4 L9,4 0,24 Z" fill="#5c4013" /></g>
);
const Shelter = ({ x, y }) => <path d={`M${x - 22},${y} L${x},${y - 14} ${x + 22},${y} M${x - 14},${y} V${y + 20} M${x + 14},${y} V${y + 20}`} fill="none" stroke="#555" strokeWidth="5" />;

const shore = 'M20,1160 L80,1110 150,1085 185,1172 480,1180 512,1222 590,1243 625,1246 620,1276 500,1262 350,1252 280,1254 270,1330 200,1415 110,1455 20,1490 Z';
const promenade = 'M20,1142 L75,1098 158,1072 190,1156 585,1156 605,1190 640,1262 632,1284 500,1275 290,1262 276,1345 205,1425 110,1466 40,1506';
const mainRoad = 'M1414,0 L1372,350 1330,560 1290,750 1232,960 1145,1250 1058,1530';

function StreetMap() {
  return (
    <MapSvg width="700" height="500" viewBox="27 18 2100 1500">
      <defs>
        <pattern id="trees" width="30" height="30" patternUnits="userSpaceOnUse" patternTransform="translate(10 16)">
          <circle cx="15" cy="15" r="2.4" fill="#5f9a55" />
        </pattern>
        <linearGradient id="pin" x1="0" y1="0" x2="0" y2="1"><stop offset="0" stopColor="#3c91cc" /><stop offset="1" stopColor="#1a6fc0" /></linearGradient>
        <filter id="soft"><feGaussianBlur stdDeviation="5" /></filter>
        {CURVED.map(([id, , d]) => <path key={id} id={id} d={d} />)}
      </defs>
      <g>{AREAS.map(([fill, pts], i) => <polygon key={i} points={pts} fill={fill} />)}</g>
      <polygon points="378,697 578,720 565,903 348,882" fill="url(#trees)" />
      <polygon points="27,695 95,692 90,768 27,775" fill="url(#trees)" />
      <polygon points="820,1215 870,1230 885,1270 870,1365 830,1362 808,1290" fill="url(#trees)" />
      <polygon points="885,1270 1030,1298 1015,1385 905,1370" fill="url(#trees)" />
      <path d={shore} fill="#c8facc" stroke="#c8facc" strokeWidth="28" strokeLinejoin="round" />
      <path d="M495,1160 H585 L625,1235 550,1215 515,1200 Z" fill="#cdebb0" />
      <path d={shore} fill="#aad3df" />
      <path d="M27,980 L110,1050 M610,1290 L572,1295 568,1350 560,1400 M525,1432 L508,1460 395,1468 390,1518" fill="none" stroke="#aad3df" strokeWidth="7" />
      <circle cx="1112" cy="50" r="142" fill="#c8facc" />
      <path d="M1120,-90 A142,142 0 0 1 1095,192 Z" fill="#88e0be" />
      <g fill="#d9d0c9" stroke="#c2b2a7" strokeWidth="2.5">
        {BIG.map((p) => <polygon key={p} points={p} />)}
        {ROWS.map((r, i) => <BuildingRow key={i} row={r} seed={i} />)}
        <circle cx="940" cy="1332" r="42" />
      </g>
      <path d="M40,25 L75,60 M300,85 L225,130 M215,575 L282,583 240,790 140,780 M885,110 L870,40 M985,90 L895,107 M1160,225 L1150,320 1225,302 M1240,145 L1265,195 M655,180 H690 V100 M1375,278 L1490,262 1490,325 M1690,955 L1865,960 M1445,1235 L1555,1240" fill="none" stroke="#999" strokeWidth="2.5" />
      <g fill="none" stroke="#cbc7c2" strokeLinecap="round" strokeLinejoin="round">
        <circle cx="1112" cy="50" r="149" strokeWidth="23" />
        {ROADS.map(([w, d]) => <path key={d} d={d} strokeWidth={w + 4} />)}
      </g>
      <g fill="none" stroke="#fff" strokeLinecap="round" strokeLinejoin="round">
        <circle cx="1112" cy="50" r="149" strokeWidth="20" />
        {ROADS.map(([w, d]) => <path key={d} d={d} strokeWidth={w + 1} />)}
      </g>
      <g fill="none" stroke="#e4e1de" strokeWidth="6" strokeDasharray="20 12">
        <path d="M138,500 L135,700 150,790 M290,355 L272,470 M155,592 L235,602 218,780 M1630,410 L1780,418 M1685,380 L1670,670 M1785,380 L1770,670 M1675,470 H1775 M1780,450 L1890,455 M1780,500 L1890,503 M1775,605 L1885,610 M1775,658 L1885,663 M1690,690 V860 L1710,908 1780,912 M1738,690 L1725,900 M1310,780 L1400,860 1580,910 1650,980 1625,1075 M1480,770 L1600,830 1830,852 M1770,1090 L1790,1310 M1885,1390 V1518 M1925,1390 V1518" />
      </g>
      <g fill="none" strokeLinejoin="round">
        {DASHED.map((d) => <g key={d}><path d={d} stroke="#aaa9a4" strokeWidth="12" /><path d={d} stroke="#fff" strokeWidth="10" strokeDasharray="30 16" /></g>)}
      </g>
      <g fill="none" stroke="#fa8072" strokeWidth="5" strokeDasharray="8 7">
        <path d={promenade} /><path d="M495,1158 L512,1200 545,1218 625,1238" />
        <path d="M1108,20 L1085,190 M1122,20 L1100,190 M975,50 L1100,70 M1115,70 L1240,105 M980,60 Q985,140 1080,190 M1042,18 L1038,68" />
        <circle cx="1038" cy="100" r="25" />
        <path d="M815,930 L860,905 858,835 900,820 950,765 975,725 1015,710 1100,725 1105,700 1140,680" />
        <path d="M100,490 L95,690" strokeDasharray="14 8" />
      </g>
      <path d="M210,1420 L290,1350 M110,1470 L200,1430 M180,1420 L290,1375 M450,380 L452,500 M2085,1375 L2125,1365" fill="none" stroke="#fff" strokeWidth="22" strokeDasharray="4 3" />
      <path d={mainRoad} fill="none" stroke="#b58840" strokeWidth="54" />
      <path d={mainRoad} fill="none" stroke="#fcd6a4" strokeWidth="50" />
      <path d="M1440,485 L1425,580" stroke="#a98a38" strokeWidth="8" strokeDasharray="18 10" />
      <g fill="none" stroke="#8fae7c" strokeWidth="3">
        {[[652, 722], [935, 755], [1010, 770], [850, 795], [798, 830], [918, 850], [1120, 778], [1203, 788], [658, 852], [115, 975], [40, 970], [583, 1480], [662, 1515]].map(([x, y]) => (
          <path key={x} d={`M${x - 12},${y + 6} H${x + 12} M${x},${y + 6} V${y - 10} M${x - 3},${y + 6} L${x - 9},${y - 5} M${x + 3},${y + 6} L${x + 9},${y - 5}`} />
        ))}
        <path d="M1590,1350 L1582,1365 H1598 Z M1590,1335 L1583,1350 H1597 Z M1590,1365 V1373 M1600,1235 V1245 M1620,1235 V1245" />
      </g>
      <path d="M461,18 V1518" stroke="#777" strokeWidth="1.5" opacity=".7" />
      <LabelLayer>
        {LABELS.map((l, i) => <MapLabel key={i} label={l} />)}
        {CURVED.map(([id, text, , length]) => (
          <text key={id} fontSize="33" fill="#333" stroke="#fff" textLength={length} lengthAdjust="spacingAndGlyphs"><textPath href={`#${id}`}>{text}</textPath></text>
        ))}
      </LabelLayer>
      <Om x={995} y={572} /><Om x={770} y={904} />
      <Christian x={1347} y={130} /><Christian x={1617} y={202} />
      <Hospital x={1290} y={501} /><Hospital x={1391} y={697} /><Hospital x={1267} y={1038} />
      <Cart x={1435} y={165} /><Cart x={1400} y={517} /><Cart x={1152} y={1350} />
      <Shelter x={585} y={1216} /><Shelter x={1122} y={1246} />
      <path d="M560,1190 L605,1195 M565,1200 L595,1185 M1100,1225 L1145,1220 M1110,1232 L1140,1212" stroke="#777" strokeWidth="4" strokeDasharray="3 8" />
      <Arrow x={1311} y={690} angle={8} /><Arrow x={1265} y={812} angle={190} /><Arrow x={1137} y={1295} angle={14} />
      <g fill="#0092da" stroke="#fff" strokeWidth="1">
        <rect x="1365" y="395" width="24" height="24" /><rect x="1856" y="358" width="24" height="24" /><rect x="1091" y="1325" width="24" height="24" /><rect x="1099" y="1360" width="24" height="24" />
      </g>
      <path d="M1363,342 L1385,290 Q1410,250 1440,262 Q1445,285 1415,310 Z" fill="#000" opacity=".35" filter="url(#soft)" />
      <path d="M1363,341 C1355,305 1317,270 1317,238 A46,46 0 0 1 1409,238 C1409,270 1371,305 1363,341 Z" fill="url(#pin)" stroke="#2a6da5" strokeWidth="3" />
      <circle cx="1363" cy="240" r="16" fill="#fff" />
    </MapSvg>
  );
}

const stations = [{ name: 'EVCore', address: 'Whitefield, Banglore, 560066', battery: 'Nickel-Metal' }];

export default function App() {
  return (
    <Frame>
      <GlobalStyle />
      <TopStrip><AddressEdge /></TopStrip>
      <Viewport>
        <Page>
          <Header>
            <Brand>Dashboard</Brand>
            <LogoutButton>Logout</LogoutButton>
          </Header>
          <Card>
            <SearchInput defaultValue="560066" aria-label="Pincode" />
            <Columns>
              <Panel>
                <PanelTitle>Available Stations</PanelTitle>
                {stations.map((s) => (
                  <StationCard key={s.name}>
                    <StationName>{s.name}</StationName>
                    <StationLine>{s.address}</StationLine>
                    <StationLine $muted>Battery Types: <strong>{s.battery}</strong></StationLine>
                  </StationCard>
                ))}
              </Panel>
              <MapBox>
                <StreetMap />
                <ZoomControl>
                  <ZoomButton aria-label="Zoom in"><svg width="16" height="16"><path d="M0,8 H16 M8,0 V16" stroke="#000" strokeWidth="2.4" /></svg></ZoomButton>
                  <ZoomButton aria-label="Zoom out" $divided><svg width="16" height="16"><path d="M0,8 H16" stroke="#000" strokeWidth="2.4" /></svg></ZoomButton>
                </ZoomControl>
                <Attribution>
                  <svg width="15" height="10"><rect width="15" height="5" fill="#4c7be1" /><rect y="5" width="15" height="5" fill="#ffd500" /></svg>
                  <a>Leaflet</a> | © <a>OpenStreetMap</a> contributors
                </Attribution>
              </MapBox>
            </Columns>
          </Card>
        </Page>
        <Scrollbar><ScrollArrow /><ScrollThumb /><ScrollArrow /></Scrollbar>
      </Viewport>
      <BottomStrip />
    </Frame>
  );
}
